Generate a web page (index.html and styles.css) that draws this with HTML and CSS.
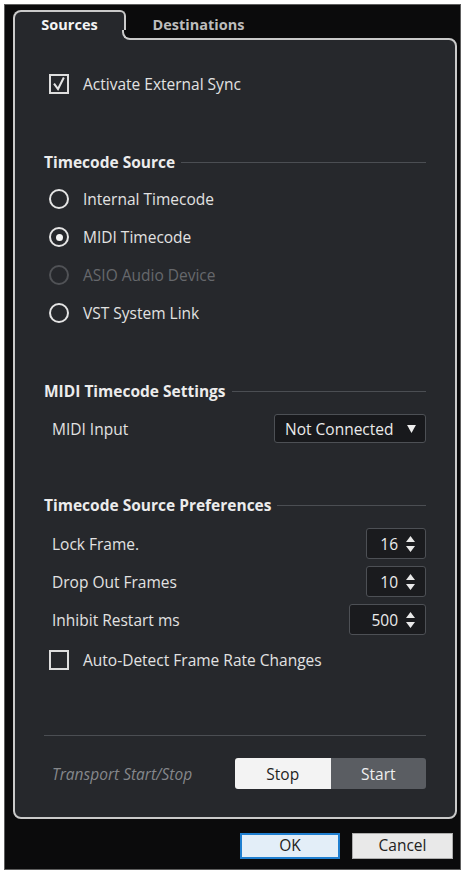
FILE: index.html
```html
<!DOCTYPE html>
<html lang="en">
<head>
<meta charset="utf-8">
<title>Project Synchronization Setup</title>
<link rel="stylesheet" href="styles.css">
</head>
<body>
<div class="window">
  <div class="tabs">
    <div class="tab active">Sources</div>
    <div class="tab">Destinations</div>
  </div>

  <div class="panel">
    <div class="check-row sync-row">
      <span class="checkbox">
        <svg viewBox="0 0 16 16" width="16" height="16"><path d="M3.6 8.4 L7 13 L12.4 2.4" fill="none" stroke="#e4e4e4" stroke-width="2" stroke-linecap="square"/></svg>
      </span>
      <span class="label">Activate External Sync</span>
    </div>

    <div class="section-title title-source"><span>Timecode Source</span></div>
    <div class="radio-group">
      <div class="radio-row"><span class="radio"></span><span class="label">Internal Timecode</span></div>
      <div class="radio-row"><span class="radio selected"></span><span class="label">MIDI Timecode</span></div>
      <div class="radio-row disabled"><span class="radio"></span><span class="label">ASIO Audio Device</span></div>
      <div class="radio-row"><span class="radio"></span><span class="label">VST System Link</span></div>
    </div>

    <div class="section-title title-midi"><span>MIDI Timecode Settings</span></div>
    <div class="field-row midi-row">
      <span class="label">MIDI Input</span>
      <div class="dropdown">
        <span>Not Connected</span>
        <svg viewBox="0 0 10 9" width="9" height="8"><path d="M0 0 H10 L5 9 Z" fill="#eeeeee"/></svg>
      </div>
    </div>

    <div class="section-title title-prefs"><span>Timecode Source Preferences</span></div>
    <div class="spin-list">
      <div class="field-row">
        <span class="label">Lock Frame.</span>
        <div class="spinbox"><span class="value">16</span><span class="arrows"><svg viewBox="0 0 9 16" width="9" height="16"><path d="M4.5 0 L9 6 H0 Z M0 10 H9 L4.5 16 Z" fill="#e8e8e8"/></svg></span></div>
      </div>
      <div class="field-row">
        <span class="label">Drop Out Frames</span>
        <div class="spinbox"><span class="value">10</span><span class="arrows"><svg viewBox="0 0 9 16" width="9" height="16"><path d="M4.5 0 L9 6 H0 Z M0 10 H9 L4.5 16 Z" fill="#e8e8e8"/></svg></span></div>
      </div>
      <div class="field-row">
        <span class="label">Inhibit Restart ms</span>
        <div class="spinbox wide"><span class="value">500</span><span class="arrows"><svg viewBox="0 0 9 16" width="9" height="16"><path d="M4.5 0 L9 6 H0 Z M0 10 H9 L4.5 16 Z" fill="#e8e8e8"/></svg></span></div>
      </div>
    </div>

    <div class="check-row autodetect-row">
      <span class="checkbox"></span>
      <span class="label">Auto-Detect Frame Rate Changes</span>
    </div>

    <div class="separator"></div>

    <div class="field-row transport-row">
      <span class="label muted">Transport Start/Stop</span>
      <div class="segmented">
        <span class="seg seg-on">Stop</span>
        <span class="seg seg-off">Start</span>
      </div>
    </div>
  </div>

  <div class="footer">
    <button class="btn btn-default">OK</button>
    <button class="btn">Cancel</button>
  </div>
</div>
</body>
</html>
```

FILE: styles.css
```css
* {
  box-sizing: border-box;
}

body {
  margin: 0;
  background: #ffffff;
  font-family: "Open Sans", "Noto Sans", sans-serif;
  font-size: 15.5px;
  color: #e2e2e2;
}

/* outer dialog frame */
.window {
  margin: 4px 0 0 4px;
  width: 457px;
  height: 866px;
  background: #0b0b0c;
  border: 1px solid #5e5e5e;
  padding: 5px 3px 0 8px;
  display: flex;
  flex-direction: column;
}

/* tab strip */
.tabs {
  display: flex;
  height: 28px;
  flex: none;
  position: relative;
  z-index: 1;
}

.tab {
  width: 113px;
  height: 30px;
  padding-top: 2px;
  line-height: 26px;
  text-align: center;
  font-size: 14.5px;
  font-weight: 700;
  color: #bdbdbd;
}

.tab + .tab {
  margin-left: 16px;
}

.tab.active {
  position: relative;
  padding-top: 0;
  color: #f4f4f4;
  background: #26282c;
  border: 2px solid #cacaca;
  border-bottom: none;
  border-radius: 8px 6px 0 0;
}

/* flared join between the active tab and the panel edge */
.tab.active::before,
.tab.active::after {
  content: "";
  position: absolute;
  left: 100%;
  bottom: 0;
  width: 8px;
  height: 8px;
}

.tab.active::before {
  background: #26282c;
  margin-left: -2px;
}

.tab.active::after {
  margin-left: -2px;
  background: #0b0b0c;
  border-left: 2px solid #cacaca;
  border-bottom: 2px solid #cacaca;
  border-bottom-left-radius: 8px;
}

/* main settings panel */
.panel {
  flex: none;
  width: 444px;
  height: 781px;
  background: #26282c;
  border: 2px solid #cacaca;
  border-radius: 0 8px 8px 8px;
  padding: 0 29px 0 29px;
  display: flex;
  flex-direction: column;
}

.label {
  white-space: nowrap;
}

/* checkboxes */
.check-row {
  display: flex;
  align-items: center;
  height: 22px;
  padding-left: 5px;
}

.sync-row {
  margin-top: 33px;
}

.autodetect-row {
  margin-top: 14px;
}

.checkbox {
  width: 20px;
  height: 20px;
  border: 2px solid #dedede;
  display: flex;
  align-items: center;
  justify-content: center;
  margin-right: 14px;
  flex: none;
}

/* section headings with trailing rule */
.section-title {
  display: flex;
  align-items: center;
  height: 20px;
  font-weight: 700;
  color: #ececec;
}

.section-title::after {
  content: "";
  flex: 1;
  height: 1px;
  background: #4b4e53;
  margin-left: 6px;
}

.title-source {
  margin-top: 57px;
}

.title-midi {
  margin-top: 49px;
}

.title-prefs {
  margin-top: 52px;
}

/* radio buttons */
.radio-group {
  margin-top: 8px;
  display: flex;
  flex-direction: column;
}

.radio-row {
  display: flex;
  align-items: center;
  height: 38px;
  padding-left: 5px;
}

.radio {
  width: 20px;
  height: 20px;
  border-radius: 50%;
  border: 2px solid #e4e4e4;
  margin-right: 14px;
  flex: none;
  display: flex;
  align-items: center;
  justify-content: center;
}

.radio.selected::after {
  content: "";
  width: 7px;
  height: 7px;
  border-radius: 50%;
  background: #f4f4f4;
}

.radio-row.disabled {
  color: #66686c;
}

.radio-row.disabled .radio {
  border-color: #505256;
}

/* label + control rows */
.field-row {
  display: flex;
  align-items: center;
  justify-content: space-between;
  padding-left: 8px;
  height: 31px;
}

.midi-row {
  margin-top: 13px;
  height: 29px;
}

.dropdown {
  width: 152px;
  height: 29px;
  border: 1px solid #4d5055;
  border-radius: 3px;
  background: #18191c;
  display: flex;
  align-items: center;
  justify-content: space-between;
  padding: 0 9px 0 10px;
  color: #eaeaea;
}

.spin-list {
  margin-top: 13px;
  display: flex;
  flex-direction: column;
  gap: 7px;
}

.spinbox {
  width: 60px;
  height: 31px;
  border: 1px solid #4d5055;
  border-radius: 3px;
  background: #1a1b1e;
  display: flex;
  align-items: center;
  justify-content: flex-end;
  padding-right: 10px;
  color: #ececec;
}

.spinbox.wide {
  width: 77px;
}

.spinbox .value {
  margin-right: 8px;
}

.spinbox .arrows {
  display: flex;
}

.separator {
  margin-top: 64px;
  height: 1px;
  background: #4b4e53;
}

/* transport toggle */
.transport-row {
  margin-top: 22px;
}

.muted {
  color: #85878b;
  font-style: italic;
}

.segmented {
  display: flex;
  width: 191px;
  height: 31px;
  border-radius: 3px;
  overflow: hidden;
}

.seg {
  flex: 1;
  display: flex;
  align-items: center;
  justify-content: center;
}

.seg-on {
  background: #f3f3f3;
  color: #1e1e1e;
}

.seg-off {
  background: #5a5d62;
  color: #f0f0f0;
}

/* dialog buttons */
.footer {
  display: flex;
  justify-content: flex-end;
  gap: 12px;
  margin-top: 14px;
  padding-right: 4px;
}

.btn {
  width: 101px;
  height: 26px;
  font-family: "Open Sans", "Noto Sans", sans-serif;
  font-size: 15.5px;
  line-height: 1;
  color: #222222;
  background: #e9e9e9;
  border: 1px solid #adadad;
  padding: 0;
}

.btn-default {
  width: 100px;
  background: #e3eef8;
  border: 2px solid #1f7fd0;
}
```
